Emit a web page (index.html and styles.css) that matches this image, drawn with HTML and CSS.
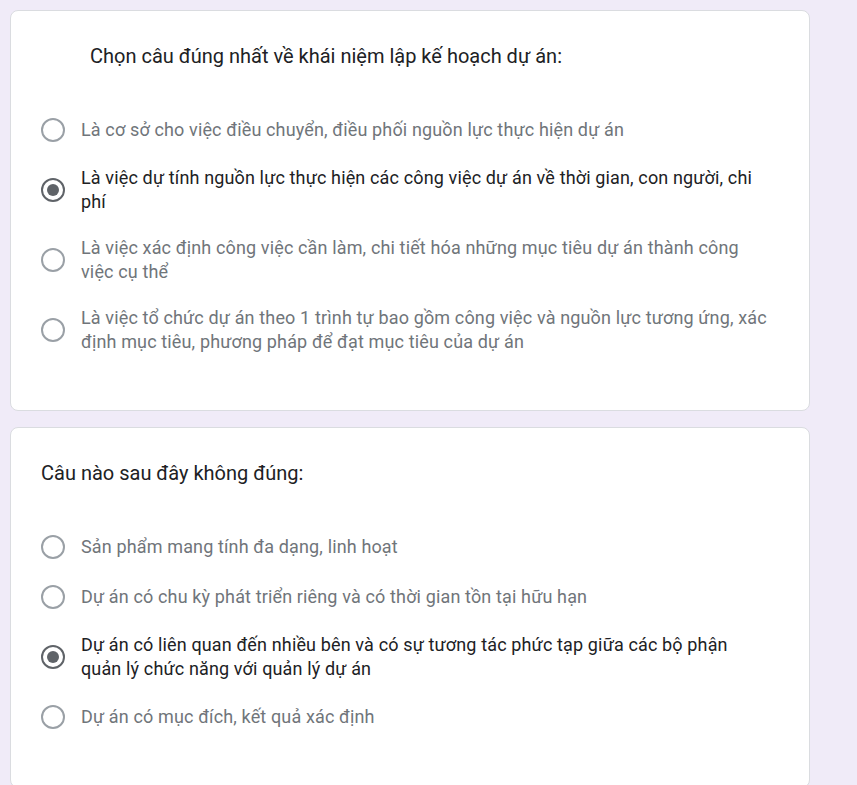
FILE: index.html
```html
<!DOCTYPE html>
<html lang="vi">
<head>
<meta charset="utf-8">
<title>Form</title>
<link rel="stylesheet" href="styles.css">
</head>
<body>
<main class="form">
  <section class="card">
    <div class="title indent">Chọn câu đúng nhất về khái niệm lập kế hoạch dự án:</div>
    <div class="options">
      <label class="option"><span class="radio"></span><span class="text">Là cơ sở cho việc điều chuyển, điều phối nguồn lực thực hiện dự án</span></label>
      <label class="option selected"><span class="radio"></span><span class="text">Là việc dự tính nguồn lực thực hiện các công việc dự án về thời gian, con người, chi phí</span></label>
      <label class="option"><span class="radio"></span><span class="text">Là việc xác định công việc cần làm, chi tiết hóa những mục tiêu dự án thành công việc cụ thể</span></label>
      <label class="option"><span class="radio"></span><span class="text">Là việc tổ chức dự án theo 1 trình tự bao gồm công việc và nguồn lực tương ứng, xác định mục tiêu, phương pháp để đạt mục tiêu của dự án</span></label>
    </div>
  </section>
  <section class="card">
    <div class="title">Câu nào sau đây không đúng:</div>
    <div class="options">
      <label class="option"><span class="radio"></span><span class="text">Sản phẩm mang tính đa dạng, linh hoạt</span></label>
      <label class="option"><span class="radio"></span><span class="text">Dự án có chu kỳ phát triển riêng và có thời gian tồn tại hữu hạn</span></label>
      <label class="option selected"><span class="radio"></span><span class="text">Dự án có liên quan đến nhiều bên và có sự tương tác phức tạp giữa các bộ phận quản lý chức năng với quản lý dự án</span></label>
      <label class="option"><span class="radio"></span><span class="text">Dự án có mục đích, kết quả xác định</span></label>
    </div>
  </section>
</main>
</body>
</html>
```
FILE: styles.css
```css
html, body {
  margin: 0;
  padding: 0;
  background: #f0ebf8;
}
body {
  font-family: Roboto, "Noto Sans", Arial, sans-serif;
  color: #202124;
}
.form {
  display: flex;
  flex-direction: column;
  gap: 16px;
  width: 800px;
  padding: 10px 0 0 10px;
}
.card {
  box-sizing: border-box;
  background: #fff;
  border: 1px solid #dadce0;
  border-radius: 8px;
  padding: 33px 38px 45px 30px;
}
.title {
  font-size: 20px;
  line-height: 24px;
  color: #202124;
  margin-bottom: 37px;
}
.indent {
  padding-left: 49px;
}
.options {
  display: flex;
  flex-direction: column;
}
.option {
  display: flex;
  align-items: center;
  gap: 16px;
  padding: 11px 0;
  min-height: 28px;
}
.radio {
  box-sizing: border-box;
  flex: none;
  width: 24px;
  height: 24px;
  border: 2px solid #9aa0a6;
  border-radius: 50%;
  display: flex;
  align-items: center;
  justify-content: center;
}
.selected .radio {
  border-color: #5f6368;
}
.selected .radio::after {
  content: "";
  width: 12px;
  height: 12px;
  border-radius: 50%;
  background: #5f6368;
}
.text {
  font-size: 18px;
  line-height: 24px;
  letter-spacing: 0.14px;
  color: #70757a;
}
.selected .text {
  color: #202124;
}
```
